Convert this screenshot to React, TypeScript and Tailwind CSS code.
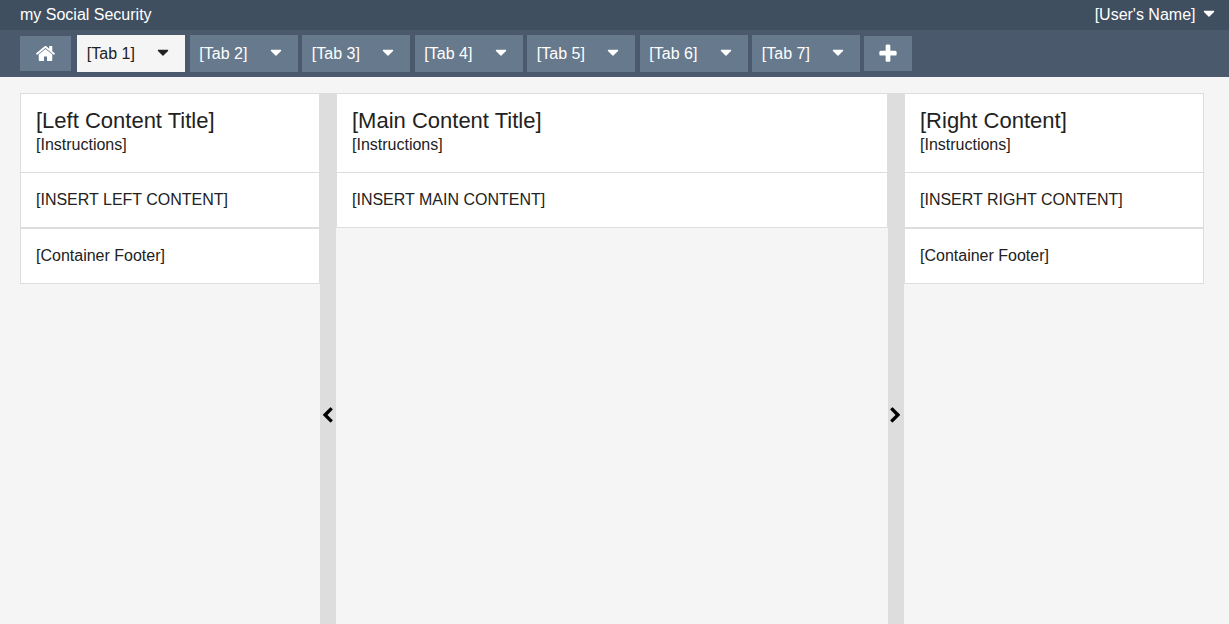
import { FaCaretDown } from "react-icons/fa";

const tabs = ["[Tab 1]", "[Tab 2]", "[Tab 3]", "[Tab 4]", "[Tab 5]", "[Tab 6]", "[Tab 7]"];

function HomeIcon() {
  return (
    <svg width="21" height="21" viewBox="0 0 1792 1792" fill="currentColor">
      <path d="M1472 992v480q0 26-19 45t-45 19h-384v-384h-256v384h-384q-26 0-45-19t-19-45v-480q0-1 .5-3t.5-3l575-474 575 474q1 2 1 6zm223-69l-62 74q-8 9-21 11h-3q-13 0-21-7l-692-577-692 577q-12 8-24 7-13-2-21-11l-62-74q-8-10-7-23.5t11-21.5l719-599q32-26 76-26t76 26l244 204v-195q0-14 9-23t23-9h192q14 0 23 9t9 23v408l219 182q10 8 11 21.5t-7 23.5z" />
    </svg>
  );
}

function PlusIcon() {
  return (
    <svg width="22" height="22" viewBox="0 0 1792 1792" fill="currentColor">
      <path d="M1600 736v192q0 40-28 68t-68 28h-416v416q0 40-28 68t-68 28h-192q-40 0-68-28t-28-68v-416h-416q-40 0-68-28t-28-68v-192q0-40 28-68t68-28h416v-416q0-40 28-68t68-28h192q40 0 68 28t28 68v416h416q40 0 68 28t28 68z" />
    </svg>
  );
}

function Panel({ title, body, footer }: { title: string; body: string; footer?: string }) {
  return (
    <div className="bg-white border border-[#dddddd]">
      <div className="h-[79px] pl-[15px] pt-[14px] border-b border-[#dddddd]">
        <div className="text-[22px] leading-[26px]">{title}</div>
        <div className="text-base leading-[22px]">{"[Instructions]"}</div>
      </div>
      <div className="h-[54px] pl-[15px] flex items-center text-base">{body}</div>
      {footer && (
        <div className="h-[56px] pl-[15px] flex items-center text-base border-t-2 border-[#dddddd]">{footer}</div>
      )}
    </div>
  );
}

function Gutter({ side }: { side: "left" | "right" }) {
  return (
    <div className="w-4 shrink-0 mt-4 pt-[314px] pr-[2px] bg-[#dddddd] flex justify-center text-black">
      <svg width="17" height="17" viewBox="0 0 1792 1792" fill="currentColor" className="shrink-0">
        {side === "left" ? (
          <path d="M1427 301l-531 531 531 531q19 19 19 45t-19 45l-166 166q-19 19-45 19t-45-19l-742-742q-19-19-19-45t19-45l742-742q19-19 45-19t45 19l166 166q19 19 19 45t-19 45z" />
        ) : (
          <path d="M1363 877l-742 742q-19 19-45 19t-45-19l-166-166q-19-19-19-45t19-45l531-531-531-531q-19-19-19-45t19-45l166-166q19-19 45-19t45 19l742 742q19 19 19 45t-19 45z" />
        )}
      </svg>
    </div>
  );
}

export default function App() {
  return (
    <div className="h-screen overflow-hidden flex flex-col bg-[#f5f5f5] text-[#222222] font-['Liberation_Sans',Arial,sans-serif]">
      <div className="h-[30px] shrink-0 bg-[#3f4f5f] text-white text-base flex items-center justify-between pl-5 pr-[11.5px]">
        <span>my Social Security</span>
        <span className="flex items-center gap-[4px]">
          {"[User's Name]"}
          <FaCaretDown size={18} className="-mt-1" />
        </span>
      </div>

      <div className="h-[47px] shrink-0 bg-[#4a5a6c] flex items-center pl-5">
        <button className="w-[51px] h-[35px] mr-[6px] bg-[#67798c] text-white flex items-center justify-center">
          <HomeIcon />
        </button>
        <div className="flex gap-[4.5px]">
          {tabs.map((tab, i) => (
            <div
              key={tab}
              className={`w-[108px] h-[37px] pl-[9.8px] pr-[13px] flex items-center justify-between text-base ${
                i === 0 ? "bg-[#f5f5f5] text-[#222222]" : "bg-[#67798c] text-white"
              }`}
            >
              <span>{tab}</span>
              <FaCaretDown size={18} className="-mt-1" />
            </div>
          ))}
        </div>
        <button className="w-12 h-[35px] ml-1 bg-[#67798c] text-white flex items-center justify-center">
          <PlusIcon />
        </button>
      </div>

      <div className="flex-1 flex items-stretch pl-5 pr-[25px]">
        <div className="w-[300px] shrink-0 pt-4">
          <Panel title="[Left Content Title]" body="[INSERT LEFT CONTENT]" footer="[Container Footer]" />
        </div>
        <Gutter side="left" />
        <div className="flex-1 pt-4">
          <Panel title="[Main Content Title]" body="[INSERT MAIN CONTENT]" />
        </div>
        <Gutter side="right" />
        <div className="w-[300px] shrink-0 pt-4">
          <Panel title="[Right Content]" body="[INSERT RIGHT CONTENT]" footer="[Container Footer]" />
        </div>
      </div>
    </div>
  );
}
